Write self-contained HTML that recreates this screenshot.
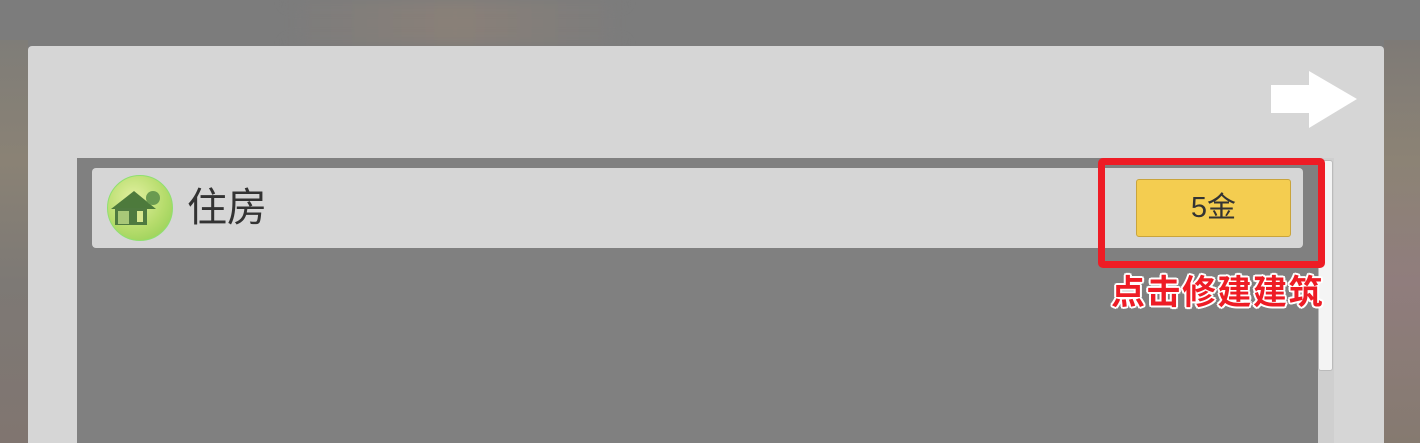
<!DOCTYPE html><html><head><meta charset="utf-8"><style>
html,body{margin:0;width:1420px;height:443px;overflow:hidden}
body{background:#7c7c7c;font-family:"Liberation Sans","Noto Sans CJK SC",sans-serif;position:relative}
.bg1{position:absolute;left:290px;top:0;width:330px;height:46px;background:linear-gradient(90deg,#7c7c7c,#8a8078,#7c7c7c);filter:blur(8px)}
.bg2{position:absolute;left:0;top:40px;width:28px;height:403px;background:linear-gradient(#7f7d78,#8a8275 30%,#7d7975 60%,#807570)}
.bg3{position:absolute;left:1384px;top:40px;width:36px;height:403px;background:linear-gradient(#7e7a76,#8c8375 30%,#907d7d 60%,#857a70)}
.panel{position:absolute;left:28px;top:46px;width:1356px;height:397px;background:#d6d6d6;border-radius:4px 4px 0 0}
.list{position:absolute;left:77px;top:158px;width:1241px;height:285px;background:#808080}
.sb{position:absolute;left:1318px;top:158px;width:16px;height:285px;background:#cfcfcf}
.sbh{position:absolute;left:1318px;top:160px;width:15px;height:211px;background:#f4f4f4;border-radius:3px;border:1px solid #bbb;box-sizing:border-box}
.row{position:absolute;left:92px;top:168px;width:1211px;height:80px;background:#d6d6d6;border-radius:4px}
.ic{position:absolute;left:107px;top:175px;width:66px;height:66px;border-radius:50%;background:radial-gradient(circle at 40% 35%,#e2f0a0,#b6dc6c 55%,#8ccc50);border:1px solid #8fe070;box-sizing:border-box;overflow:hidden}
.name{position:absolute;left:187px;top:183px;font-size:40px;color:#333;line-height:50px}
.btn{position:absolute;left:1136px;top:179px;width:155px;height:58px;background:#f4cd50;border:1px solid #c9a43c;box-sizing:border-box;border-radius:3px;text-align:center;line-height:56px;font-size:29px;color:#333}
.red{position:absolute;left:1098px;top:158px;width:227px;height:110px;border:7px solid #ee1c25;border-radius:5px;box-sizing:border-box}
.tip{position:absolute;left:1111px;top:271px;font-size:34px;font-weight:bold;color:#ee1c25;line-height:44px;letter-spacing:1.5px;text-shadow:2px 0 #fff,-2px 0 #fff,0 2px #fff,0 -2px #fff,1.5px 1.5px #fff,-1.5px -1.5px #fff,1.5px -1.5px #fff,-1.5px 1.5px #fff}
</style></head><body>
<div class="bg1"></div><div class="bg2"></div><div class="bg3"></div>
<div class="panel"></div>
<svg style="position:absolute;left:1270px;top:70px" width="90" height="60"><polygon points="1,15 39,15 39,1 87,29 39,58 39,43 1,43" fill="#fff"/></svg>
<div class="list"></div><div class="sb"></div><div class="sbh"></div>
<div class="row"></div>
<div class="ic"><svg width="66" height="66"><polygon points="3,33 26,15 48,33" fill="#4d7a3c"/><rect x="7" y="32" width="32" height="17" fill="#4f7a40"/><rect x="10" y="35" width="11" height="13" fill="#a8c878"/><rect x="29" y="35" width="6" height="11" fill="#d8e890"/><circle cx="45" cy="22" r="7" fill="#6a9a50"/></svg></div>
<div class="name">住房</div>
<div class="btn">5金</div>
<div class="red"></div>
<div class="tip">点击修建建筑</div>
</body></html>
